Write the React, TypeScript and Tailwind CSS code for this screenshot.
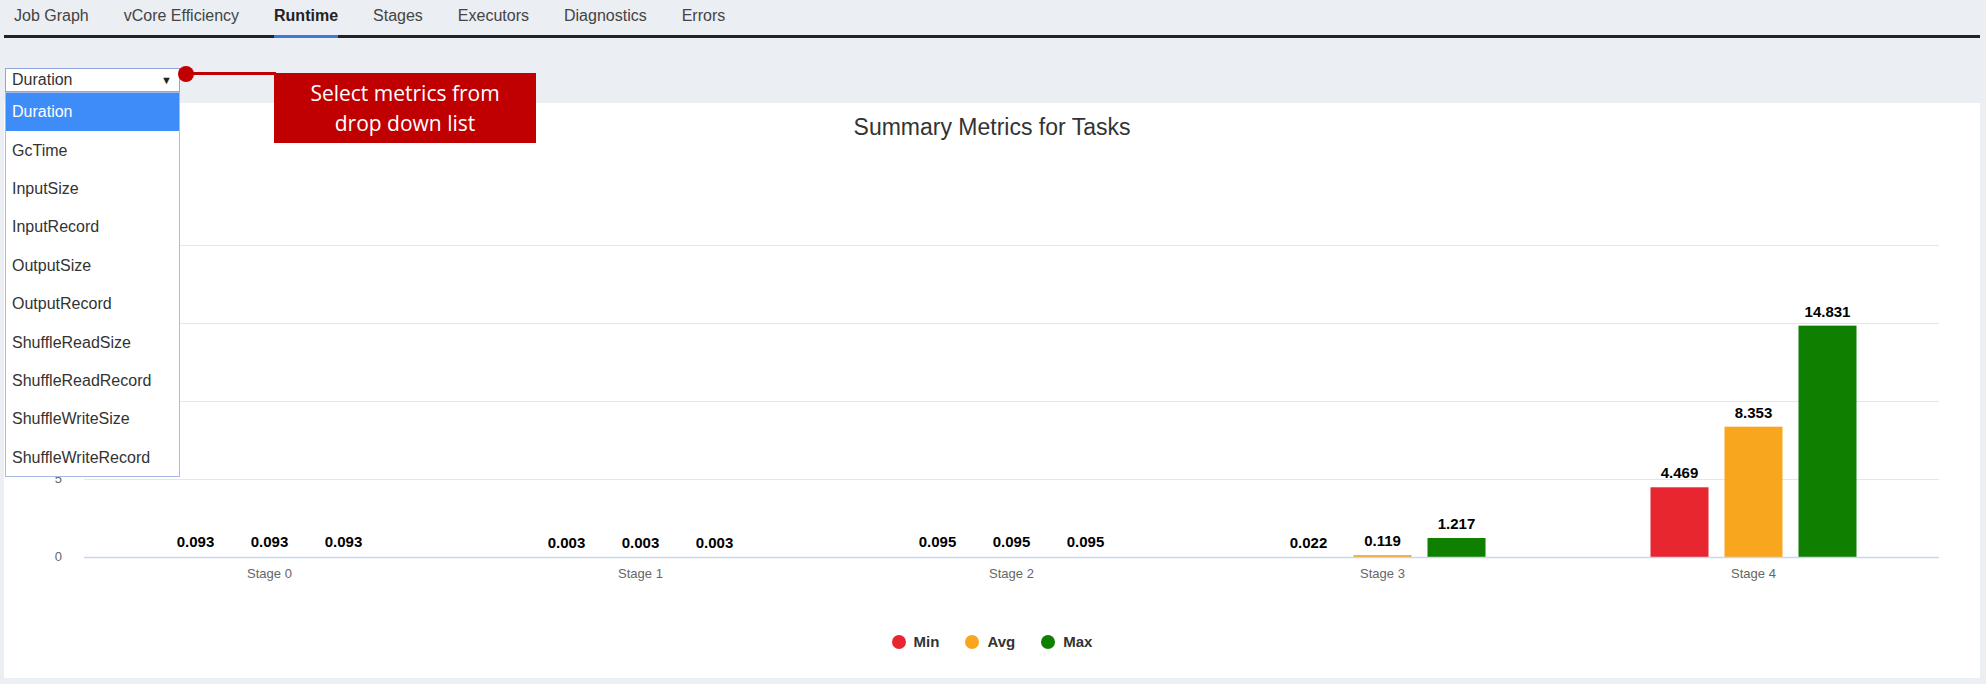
import React from "react";

const stages = [
  { name: "Stage 0", v: [0.093, 0.093, 0.093] },
  { name: "Stage 1", v: [0.003, 0.003, 0.003] },
  { name: "Stage 2", v: [0.095, 0.095, 0.095] },
  { name: "Stage 3", v: [0.022, 0.119, 1.217] },
  { name: "Stage 4", v: [4.469, 8.353, 14.831] },
];
const colors = ["#e8262f", "#f9a61f", "#0f7f00"];
const tabs = ["Job Graph", "vCore Efficiency", "Runtime", "Stages", "Executors", "Diagnostics", "Errors"];
const metrics = [
  "Duration",
  "GcTime",
  "InputSize",
  "InputRecord",
  "OutputSize",
  "OutputRecord",
  "ShuffleReadSize",
  "ShuffleReadRecord",
  "ShuffleWriteSize",
  "ShuffleWriteRecord",
];

const PLOT_L = 84;
const PLOT_R = 1939;
const BASE = 557;
const PER = 15.6;
const CAT = (PLOT_R - PLOT_L) / 5;

function Chart() {
  const grid = [5, 10, 15, 20];
  return (
    <svg width={1976} height={470} className="block">
      <g transform="translate(-4,-151)" fontFamily="'Liberation Sans', Arial, sans-serif">
        {grid.map((g) => (
          <line key={g} x1={PLOT_L} x2={PLOT_R} y1={BASE - g * PER + 0.5} y2={BASE - g * PER + 0.5} stroke="#e6e6e6" strokeWidth={1} />
        ))}
        {[0, ...grid].map((g) => (
          <text key={"l" + g} x={62} y={BASE - g * PER + 4} textAnchor="end" fontSize={13} fill="#666">
            {g}
          </text>
        ))}
        {stages.map((s, i) => {
          const c = PLOT_L + CAT * (i + 0.5);
          return (
            <g key={s.name}>
              {s.v.map((v, j) => {
                const h = v * PER;
                const x = c + (j - 1) * 74 - 29;
                const top = BASE - h;
                return (
                  <g key={j}>
                    {h >= 1.7 && <rect x={x} y={top} width={58} height={h} fill={colors[j]} />}
                    <text x={c + (j - 1) * 74} y={top - 9} textAnchor="middle" fontSize={15} fontWeight={700} fill="#000">
                      {v.toFixed(3)}
                    </text>
                  </g>
                );
              })}
              <text x={c} y={578} textAnchor="middle" fontSize={13} fill="#666">
                {s.name}
              </text>
            </g>
          );
        })}
        <line x1={PLOT_L} x2={PLOT_R} y1={BASE + 0.5} y2={BASE + 0.5} stroke="#ccd6eb" strokeWidth={1.5} />
      </g>
    </svg>
  );
}

export default function App() {
  return (
    <div className="relative w-[1986px] h-[684px] bg-[#ebeef3] overflow-hidden" style={{ fontFamily: "'Liberation Sans', Arial, sans-serif" }}>
      {/* Tabs */}
      <div className="flex h-[38px] ml-[4px] w-[1976px] border-b-[3px] border-[#1f2326] pl-[10px] gap-[35px]">
        {tabs.map((t) =>
          t === "Runtime" ? (
            <div key={t} className="h-[38px] leading-[32px] text-[16px] font-bold text-[#222] border-b-[3px] border-[#3a7bd5] -mb-[3px]">
              {t}
            </div>
          ) : (
            <div key={t} className="h-[35px] leading-[32px] text-[16px] text-[#444]">
              {t}
            </div>
          )
        )}
      </div>

      {/* Select */}
      <div className="mt-[30px] ml-[5px] w-[175px] h-[24px] bg-white border border-[#8ea6dc] flex items-center justify-between pl-[6px] pr-[7px] text-[16px] text-[#333]">
        <span>Duration</span>
        <span className="text-[11px] text-[#222]">▼</span>
      </div>

      {/* Panel */}
      <div className="mt-[11px] ml-[4px] w-[1976px] h-[575px] bg-white flex flex-col">
        <div className="h-[48px] flex items-center justify-center text-[23px] text-[#333]">Summary Metrics for Tasks</div>
        <Chart />
        <div className="h-[42px] flex items-center justify-center gap-[26px] text-[15px] font-bold text-[#333]">
          {["Min", "Avg", "Max"].map((l, i) => (
            <div key={l} className="flex items-center gap-[8px]">
              <span className="w-[14px] h-[14px] rounded-full" style={{ backgroundColor: colors[i] }} />
              <span>{l}</span>
            </div>
          ))}
        </div>
      </div>

      {/* Dropdown list overlay */}
      <div className="absolute left-[5px] top-[92px] w-[175px] h-[385px] bg-white border border-[#a9b9e6]">
        {metrics.map((m, i) => (
          <div
            key={m}
            className={
              i === 0
                ? "h-[38.4px] flex items-center pl-[6px] text-[16px] text-white bg-[#3e8cf7]"
                : "h-[38.4px] flex items-center pl-[6px] text-[16px] text-[#333]"
            }
          >
            {m}
          </div>
        ))}
      </div>

      {/* Callout */}
      <div className="absolute left-[178px] top-[66px] w-[16px] h-[16px] rounded-full bg-[#c00000]" />
      <div className="absolute left-[186px] top-[72px] w-[90px] h-[3px] bg-[#c00000]" />
      <div
        className="absolute left-[274px] top-[73px] w-[262px] h-[70px] bg-[#c00000] text-white text-[21px] leading-[30px] flex flex-col items-center justify-center"
        style={{ fontFamily: "'Open Sans', sans-serif" }}
      >
        <span>Select metrics from</span>
        <span>drop down list</span>
      </div>
    </div>
  );
}
